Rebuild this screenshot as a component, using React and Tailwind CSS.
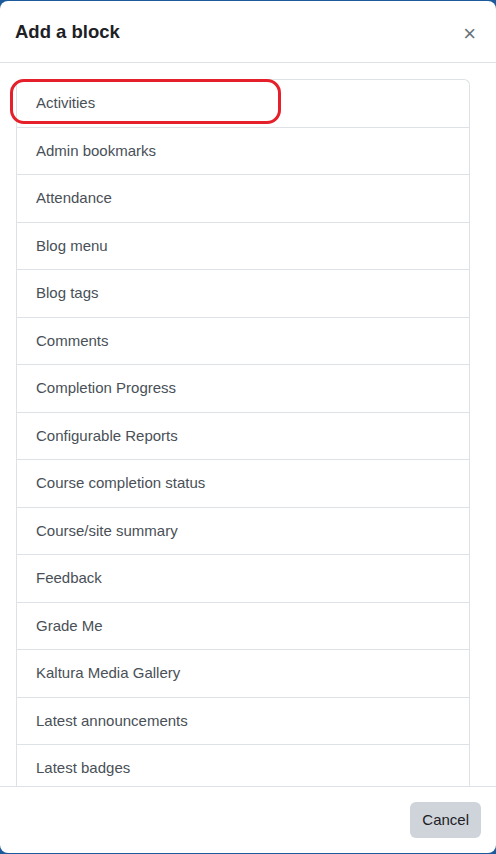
const blocks = [
  "Activities",
  "Admin bookmarks",
  "Attendance",
  "Blog menu",
  "Blog tags",
  "Comments",
  "Completion Progress",
  "Configurable Reports",
  "Course completion status",
  "Course/site summary",
  "Feedback",
  "Grade Me",
  "Kaltura Media Gallery",
  "Latest announcements",
  "Latest badges",
];

export default function App() {
  return (
    <div className="h-[854px] w-[496px] bg-[#1d5a9c] pt-[1px] font-['Segoe_UI','Liberation_Sans',sans-serif] text-[#1d2125]">
      <div className="flex h-[852px] flex-col overflow-hidden rounded-lg bg-white">
        {/* HEADER */}
        <div className="flex h-[62px] shrink-0 items-center justify-between border-b border-[#dee2e6] pl-[15px] pr-5">
          <h5 className="text-[18.5px] font-bold">Add a block</h5>
          <button className="mt-1 text-[22px] leading-none text-[#6a737b]">×</button>
        </div>

        {/* BODY */}
        <div className="relative flex-1 overflow-hidden pl-4 pr-[26px] pt-4">
          <div className="rounded-t-md border-x border-t border-[#dee2e6]">
            {blocks.map((name) => (
              <a
                key={name}
                href="#"
                className="flex h-[47.5px] items-center border-b border-[#dee2e6] pl-[19px] text-[15px] text-[#495057]"
              >
                {name}
              </a>
            ))}
          </div>
          <div className="absolute left-[10px] top-4 h-[45px] w-[271px] rounded-[14px] border-[3px] border-[#e5202b]" />
        </div>

        {/* FOOTER */}
        <div className="flex h-[67px] shrink-0 items-center justify-end border-t border-[#dee2e6] px-[15px]">
          <button className="h-[36px] rounded-md bg-[#ced4da] px-3 text-[15px] text-[#1d2125]">Cancel</button>
        </div>
      </div>
    </div>
  );
}
